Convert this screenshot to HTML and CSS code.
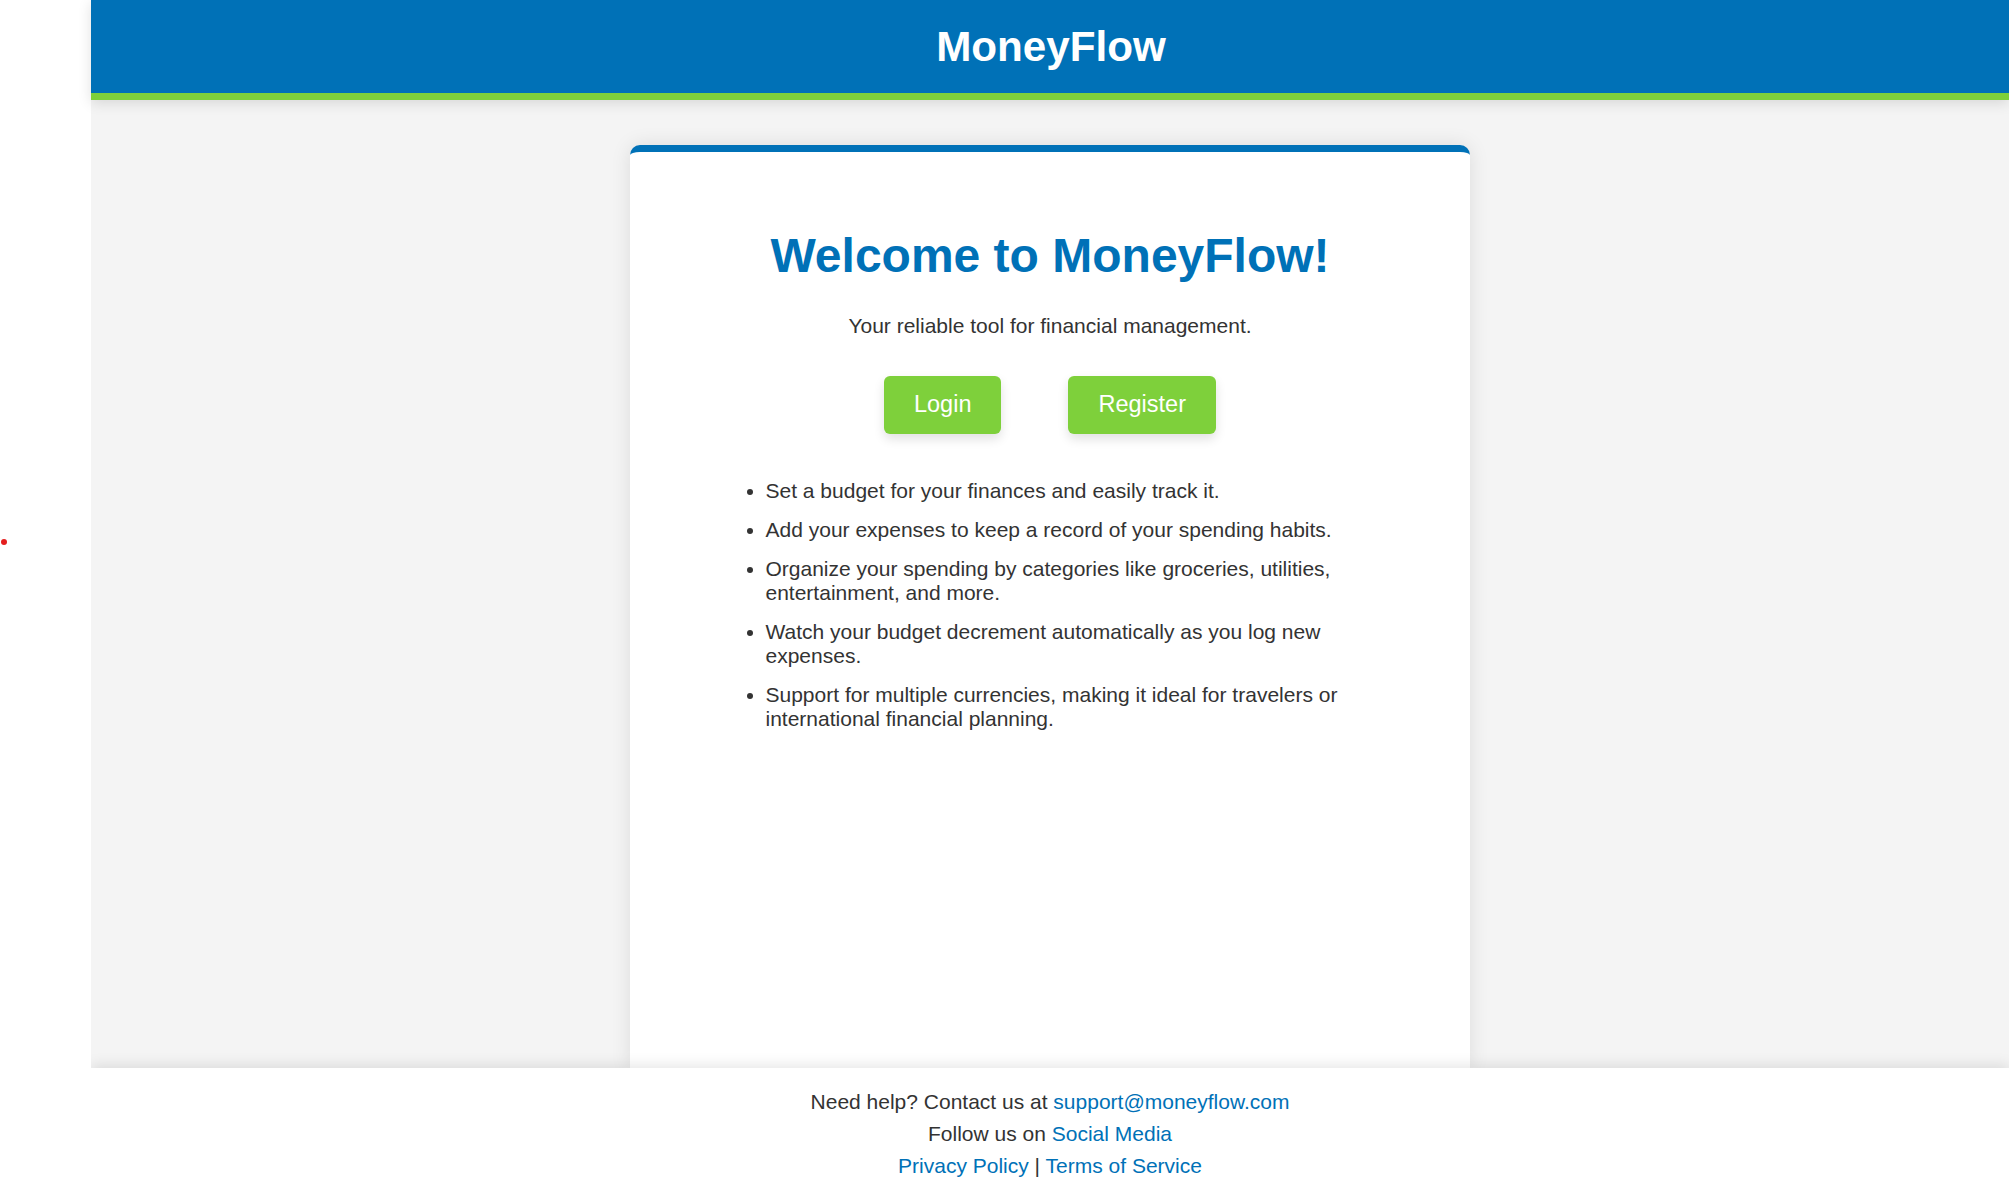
FILE: index.html
```html
<!DOCTYPE html>
<html lang="en">
<head>
<meta charset="utf-8">
<title>MoneyFlow</title>
<link rel="stylesheet" href="styles.css">
</head>
<body>
<div class="shell">
  <aside class="gutter"><span class="dot"></span></aside>
  <div class="app">
    <header class="topbar">
      <h1 class="brand">MoneyFlow</h1>
    </header>
    <main class="main">
      <section class="card">
        <h2 class="title">Welcome to MoneyFlow!</h2>
        <p class="tagline">Your reliable tool for financial management.</p>
        <div class="actions">
          <a class="btn" href="#">Login</a>
          <a class="btn" href="#">Register</a>
        </div>
        <ul class="features">
          <li>Set a budget for your finances and easily track it.</li>
          <li>Add your expenses to keep a record of your spending habits.</li>
          <li>Organize your spending by categories like groceries, utilities, entertainment, and more.</li>
          <li>Watch your budget decrement automatically as you log new expenses.</li>
          <li>Support for multiple currencies, making it ideal for travelers or international financial planning.</li>
        </ul>
      </section>
    </main>
    <footer class="footer">
      <p class="footer-line">Need help? Contact us at <a href="#">support@moneyflow.com</a></p>
      <p class="footer-line">Follow us on <a href="#">Social Media</a></p>
      <p class="footer-line"><a href="#">Privacy Policy</a> | <a href="#">Terms of Service</a></p>
    </footer>
  </div>
</div>
</body>
</html>
```

FILE: styles.css
```css
html, body {
  margin: 0;
  padding: 0;
  background: #ffffff;
  font-family: "Liberation Sans", Arial, sans-serif;
  color: #333333;
}

.shell {
  display: flex;
  height: 1198px;
  overflow: hidden;
}

.gutter {
  flex: 0 0 91px;
  position: relative;
  background: #ffffff;
}

.dot {
  position: absolute;
  left: 1px;
  top: 539px;
  width: 6px;
  height: 6px;
  border-radius: 50%;
  background: #e41e1e;
}

.app {
  flex: 1;
  display: flex;
  flex-direction: column;
  min-width: 0;
}

.topbar {
  position: relative;
  z-index: 2;
  background: #0071b7;
  border-bottom: 7px solid #7ed03b;
  padding: 23px 0 22px 2px;
  text-align: center;
  box-shadow: 0 3px 13px rgba(0, 0, 0, 0.12);
}

.brand {
  margin: 0;
  font-size: 42.2px;
  line-height: 48px;
  font-weight: bold;
  color: #ffffff;
}

.main {
  flex: 1;
  background: #f4f4f4;
  padding-top: 45px;
  display: flex;
  flex-direction: column;
  align-items: center;
}

.card {
  flex: 1;
  width: 840px;
  box-sizing: border-box;
  background: #ffffff;
  border-top: 7px solid #0071b7;
  border-radius: 10px 10px 0 0;
  box-shadow: 0 0 20px rgba(0, 0, 0, 0.1);
  padding-top: 76px;
  display: flex;
  flex-direction: column;
  align-items: center;
}

.title {
  margin: 0;
  font-size: 48px;
  line-height: 55px;
  font-weight: bold;
  color: #0071b7;
}

.tagline {
  margin: 30.8px 0 0;
  font-size: 21px;
  line-height: 24.1px;
  color: #333333;
}

.actions {
  display: flex;
  gap: 67px;
  margin-top: 38px;
}

.btn {
  display: block;
  padding: 15.5px 30px;
  font-size: 23.5px;
  line-height: 27px;
  color: #ffffff;
  background: #7ed03b;
  border-radius: 6px;
  text-decoration: none;
  box-shadow: 0 5px 11px rgba(0, 0, 0, 0.12);
}

.features {
  width: 620px;
  margin: 45.2px 0 0;
  padding: 0 0 0 51px;
  list-style: disc;
}

.features li {
  font-size: 21px;
  line-height: 24.1px;
  margin-bottom: 14.8px;
  color: #333333;
}

.footer {
  background: #ffffff;
  padding: 18px 0 16px;
  text-align: center;
  box-shadow: 0 -3px 13px rgba(0, 0, 0, 0.1);
}

.footer-line {
  margin: 0;
  font-size: 21px;
  line-height: 32px;
  color: #333333;
}

.footer-line a {
  color: #0071b7;
  text-decoration: none;
}
```
